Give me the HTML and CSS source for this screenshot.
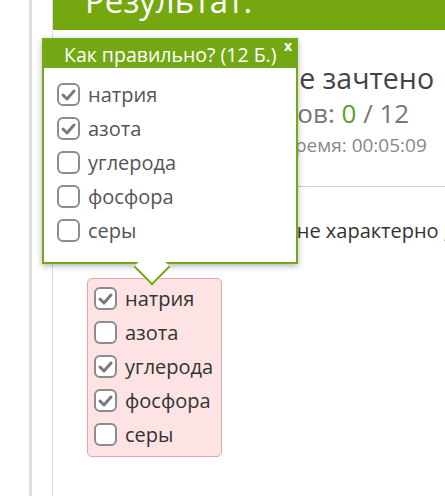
FILE: index.html
```html
<!DOCTYPE html>
<html lang="ru">
<head>
    <meta charset="UTF-8">
    <meta name="viewport" content="width=device-width, initial-scale=1.0">
    <title>Результат</title>
    <link rel="stylesheet" href="styles.css">
</head>
<body>
    <div class="rail"></div>
    <div class="card">
        <div class="card-head">
            <h1>Результат:</h1>
        </div>
        <div class="card-body">
            <div class="summary">
                <h2>Упражнение не зачтено</h2>
                <div class="score">Получено баллов: <span class="got">0</span> / 12</div>
                <div class="time">Затраченное время: 00:05:09</div>
            </div>
            <div class="question">
                <p>Для живых организмов не характерно , для</p>
                <div class="answer">
                    <label class="option"><span class="box checked"><svg viewBox="0 0 19 19"><polyline points="4,10 8,14 15,6"/></svg></span>натрия</label>
                    <label class="option"><span class="box"></span>азота</label>
                    <label class="option"><span class="box checked"><svg viewBox="0 0 19 19"><polyline points="4,10 8,14 15,6"/></svg></span>углерода</label>
                    <label class="option"><span class="box checked"><svg viewBox="0 0 19 19"><polyline points="4,10 8,14 15,6"/></svg></span>фосфора</label>
                    <label class="option"><span class="box"></span>серы</label>
                </div>
            </div>
        </div>
    </div>

    <!-- подсказка с правильным ответом -->
    <div class="hint">
        <div class="hint-head">Как правильно? (12 Б.)<span class="close">x</span></div>
        <div class="hint-body">
            <label class="option"><span class="box checked"><svg viewBox="0 0 19 19"><polyline points="4,10 8,14 15,6"/></svg></span>натрия</label>
            <label class="option"><span class="box checked"><svg viewBox="0 0 19 19"><polyline points="4,10 8,14 15,6"/></svg></span>азота</label>
            <label class="option"><span class="box"></span>углерода</label>
            <label class="option"><span class="box"></span>фосфора</label>
            <label class="option"><span class="box"></span>серы</label>
        </div>
        <div class="hint-arrow"></div>
    </div>
</body>
</html>
```

FILE: styles.css
```css
body {
    font-family: 'Open Sans', 'Noto Sans', sans-serif;
    margin: 0;
    height: 496px;
    display: flex;
    overflow: hidden;
    background: #fff;
}
.rail {
    width: 29px;
    flex-shrink: 0;
    border-right: 3px solid #dcdce6;
}
.card {
    flex: 1;
    margin-left: 20px;
    border-left: 1px solid #dddddd;
    overflow: hidden;
}
.card-head {
    height: 30px;
    background-color: #75a810;
    overflow: hidden;
    padding-left: 32px;
}
h1 {
    margin: -15px 0 0;
    font-size: 33px;
    line-height: 32px;
    font-weight: 400;
    color: #fff;
    white-space: nowrap;
}
.card-body {
    padding-left: 34px;
}
.summary {
    padding: 30px 0 26px 53px;
    border-bottom: 1px solid #cfcfcf;
    margin-left: -34px;
    white-space: nowrap;
}
h2 {
    margin: 0 0 0 -8px;
    font-size: 28.5px;
    line-height: 36px;
    font-weight: 400;
    color: #444;
}
.score {
    font-size: 26px;
    line-height: 34px;
    color: #777;
}
.got {
    color: #5c9e2c;
}
.time {
    margin-left: 52px;
    font-size: 19px;
    line-height: 30px;
    color: #888;
}
.question p {
    margin: 30px 0 0 -24px;
    font-size: 20px;
    line-height: 28px;
    color: #333;
    white-space: nowrap;
}
.answer {
    display: inline-flex;
    flex-direction: column;
    margin-top: 33px;
    padding: 2px 8px 5px 6px;
    background-color: #fde3e3;
    border: 1px solid #e7a6a6;
    border-radius: 5px;
}
.option {
    display: flex;
    align-items: center;
    height: 34px;
    font-size: 20px;
    color: #333;
}
.box {
    width: 19px;
    height: 19px;
    border: 2px solid #8c8c8c;
    border-radius: 6px;
    background: #fff;
    margin-right: 8px;
    flex-shrink: 0;
}
.box svg {
    display: block;
    width: 19px;
    height: 19px;
}
.box polyline {
    fill: none;
    stroke: #7a7a7a;
    stroke-width: 3;
    stroke-linecap: round;
    stroke-linejoin: round;
}
.hint {
    position: absolute;
    left: 42px;
    top: 38px;
    width: 252px;
    height: 222px;
    background: #fff;
    border: 2px solid #76a918;
    box-shadow: 0 2px 6px rgba(0, 0, 0, 0.3);
}
.hint-head {
    position: relative;
    height: 28px;
    line-height: 30px;
    background-color: #72a814;
    color: #fff;
    font-size: 19.5px;
    padding-left: 20px;
    white-space: nowrap;
}
.close {
    position: absolute;
    right: 4px;
    top: -9px;
    font-size: 14px;
    font-weight: 700;
}
.hint-body {
    padding: 9px 0 0 13px;
}
.hint-body .option {
    color: #555;
}
.hint-arrow {
    position: absolute;
    left: 95px;
    bottom: -18px;
    width: 24px;
    height: 24px;
    background: #fff;
    border-right: 2px solid #76a918;
    border-bottom: 2px solid #76a918;
    transform: rotate(45deg);
}
```
